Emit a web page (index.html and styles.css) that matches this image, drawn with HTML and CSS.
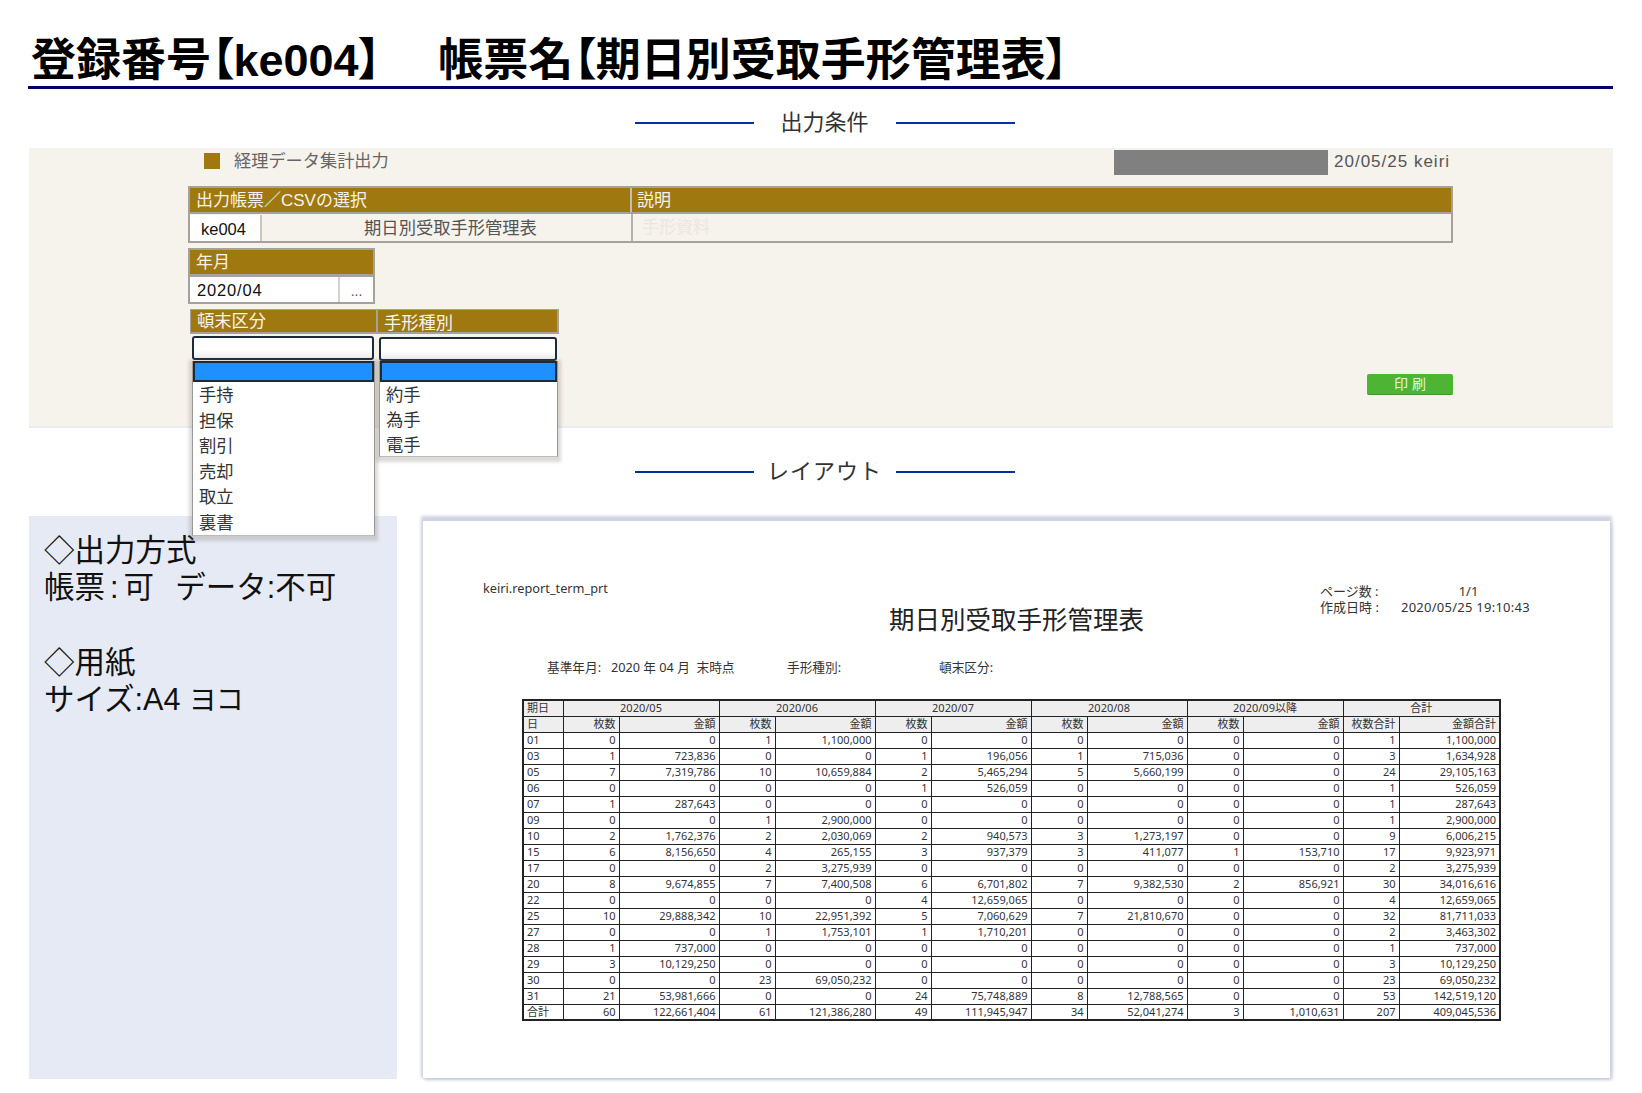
FILE: index.html
```html
<!DOCTYPE html>
<html lang="ja">
<head>
    <meta charset="UTF-8">
    <title>期日別受取手形管理表</title>
    <link rel="stylesheet" href="styles.css">
</head>
<body>
    <h1 class="page-title">登録番号【ke004】<span class="title-gap"></span>帳票名【期日別受取手形管理表】</h1>

    <div class="section-title first"><span>出力条件</span></div>

    <div class="panel">
        <div class="panel-inner">
            <div class="topbar">
                <div class="topbar-mark"></div>
                <div class="topbar-name">経理データ集計出力</div>
                <div class="topbar-mask"></div>
                <div class="topbar-date">20/05/25 keiri</div>
            </div>

            <div class="box">
                <div class="box-head">
                    <div class="head-cell head-report">出力帳票／CSVの選択</div>
                    <div class="head-cell head-desc">説明</div>
                </div>
                <div class="box-row">
                    <div class="report-code">ke004</div>
                    <div class="report-name">期日別受取手形管理表</div>
                    <div class="report-desc">手形資料</div>
                </div>
            </div>

            <div class="box box-month">
                <div class="box-head">
                    <div class="head-cell">年月</div>
                </div>
                <div class="box-row month-row">
                    <div class="month-value">2020/04</div>
                    <div class="month-button">...</div>
                </div>
            </div>

            <div class="pickers">
                <div class="picker picker-left">
                    <div class="picker-head">頓末区分</div>
                    <div class="picker-input"></div>
                    <ul class="menu">
                        <li class="menu-selected"></li>
                        <li>手持</li>
                        <li>担保</li>
                        <li>割引</li>
                        <li>売却</li>
                        <li>取立</li>
                        <li>裏書</li>
                    </ul>
                </div>
                <div class="picker picker-right">
                    <div class="picker-head">手形種別</div>
                    <div class="picker-input"></div>
                    <ul class="menu">
                        <li class="menu-selected"></li>
                        <li>約手</li>
                        <li>為手</li>
                        <li>電手</li>
                    </ul>
                </div>
            </div>

            <div class="actions">
                <button class="print-button" type="button">印 刷</button>
            </div>
        </div>
    </div>

    <div class="section-title"><span class="spaced">レイアウト</span></div>

    <div class="layout">
        <div class="notes">
            <p>◇出力方式</p>
            <p>帳票<span class="notes-colon">:</span>可&ensp;&thinsp;データ:不可</p>
            <p class="notes-blank"></p>
            <p>◇用紙</p>
            <p>サイズ:A4 <span class="notes-narrow">ヨコ</span></p>
        </div>

        <div class="sheet">
            <div class="sheet-head">
                <div class="sheet-id">keiri.report_term_prt</div>
                <div class="sheet-title">期日別受取手形管理表</div>
                <div class="sheet-meta">
                    <div class="meta-row"><span class="meta-label">ページ数 :</span><span class="meta-page">1/1</span></div>
                    <div class="meta-row"><span class="meta-label">作成日時 :</span><span class="meta-date">2020/05/25 19:10:43</span></div>
                </div>
            </div>

            <div class="sheet-filter">
                <div class="filter-base">基準年月:&nbsp;&nbsp;&nbsp;2020 年 04 月&nbsp;&nbsp;末時点</div>
                <div class="filter-kind">手形種別:</div>
                <div>頓末区分:</div>
            </div>

            <table class="report">
                <colgroup>
                    <col class="col-day">
                    <col class="col-num"><col class="col-amt">
                    <col class="col-num"><col class="col-amt">
                    <col class="col-num"><col class="col-amt">
                    <col class="col-num"><col class="col-amt">
                    <col class="col-num"><col class="col-amt">
                    <col class="col-num"><col class="col-amt">
                </colgroup>
                <thead>
                    <tr>
                        <th class="left">期日</th>
                        <th colspan="2">2020/05</th>
                        <th colspan="2">2020/06</th>
                        <th colspan="2">2020/07</th>
                        <th colspan="2">2020/08</th>
                        <th colspan="2">2020/09以降</th>
                        <th colspan="2">合計</th>
                    </tr>
                    <tr class="sub">
                        <th class="left">日</th>
                        <th>枚数</th><th>金額</th>
                        <th>枚数</th><th>金額</th>
                        <th>枚数</th><th>金額</th>
                        <th>枚数</th><th>金額</th>
                        <th>枚数</th><th>金額</th>
                        <th>枚数合計</th><th>金額合計</th>
                    </tr>
                </thead>
                <tbody>
                    <tr><td>01</td><td>0</td><td>0</td><td>1</td><td>1,100,000</td><td>0</td><td>0</td><td>0</td><td>0</td><td>0</td><td>0</td><td>1</td><td>1,100,000</td></tr>
                    <tr><td>03</td><td>1</td><td>723,836</td><td>0</td><td>0</td><td>1</td><td>196,056</td><td>1</td><td>715,036</td><td>0</td><td>0</td><td>3</td><td>1,634,928</td></tr>
                    <tr><td>05</td><td>7</td><td>7,319,786</td><td>10</td><td>10,659,884</td><td>2</td><td>5,465,294</td><td>5</td><td>5,660,199</td><td>0</td><td>0</td><td>24</td><td>29,105,163</td></tr>
                    <tr><td>06</td><td>0</td><td>0</td><td>0</td><td>0</td><td>1</td><td>526,059</td><td>0</td><td>0</td><td>0</td><td>0</td><td>1</td><td>526,059</td></tr>
                    <tr><td>07</td><td>1</td><td>287,643</td><td>0</td><td>0</td><td>0</td><td>0</td><td>0</td><td>0</td><td>0</td><td>0</td><td>1</td><td>287,643</td></tr>
                    <tr><td>09</td><td>0</td><td>0</td><td>1</td><td>2,900,000</td><td>0</td><td>0</td><td>0</td><td>0</td><td>0</td><td>0</td><td>1</td><td>2,900,000</td></tr>
                    <tr><td>10</td><td>2</td><td>1,762,376</td><td>2</td><td>2,030,069</td><td>2</td><td>940,573</td><td>3</td><td>1,273,197</td><td>0</td><td>0</td><td>9</td><td>6,006,215</td></tr>
                    <tr><td>15</td><td>6</td><td>8,156,650</td><td>4</td><td>265,155</td><td>3</td><td>937,379</td><td>3</td><td>411,077</td><td>1</td><td>153,710</td><td>17</td><td>9,923,971</td></tr>
                    <tr><td>17</td><td>0</td><td>0</td><td>2</td><td>3,275,939</td><td>0</td><td>0</td><td>0</td><td>0</td><td>0</td><td>0</td><td>2</td><td>3,275,939</td></tr>
                    <tr><td>20</td><td>8</td><td>9,674,855</td><td>7</td><td>7,400,508</td><td>6</td><td>6,701,802</td><td>7</td><td>9,382,530</td><td>2</td><td>856,921</td><td>30</td><td>34,016,616</td></tr>
                    <tr><td>22</td><td>0</td><td>0</td><td>0</td><td>0</td><td>4</td><td>12,659,065</td><td>0</td><td>0</td><td>0</td><td>0</td><td>4</td><td>12,659,065</td></tr>
                    <tr><td>25</td><td>10</td><td>29,888,342</td><td>10</td><td>22,951,392</td><td>5</td><td>7,060,629</td><td>7</td><td>21,810,670</td><td>0</td><td>0</td><td>32</td><td>81,711,033</td></tr>
                    <tr><td>27</td><td>0</td><td>0</td><td>1</td><td>1,753,101</td><td>1</td><td>1,710,201</td><td>0</td><td>0</td><td>0</td><td>0</td><td>2</td><td>3,463,302</td></tr>
                    <tr><td>28</td><td>1</td><td>737,000</td><td>0</td><td>0</td><td>0</td><td>0</td><td>0</td><td>0</td><td>0</td><td>0</td><td>1</td><td>737,000</td></tr>
                    <tr><td>29</td><td>3</td><td>10,129,250</td><td>0</td><td>0</td><td>0</td><td>0</td><td>0</td><td>0</td><td>0</td><td>0</td><td>3</td><td>10,129,250</td></tr>
                    <tr><td>30</td><td>0</td><td>0</td><td>23</td><td>69,050,232</td><td>0</td><td>0</td><td>0</td><td>0</td><td>0</td><td>0</td><td>23</td><td>69,050,232</td></tr>
                    <tr><td>31</td><td>21</td><td>53,981,666</td><td>0</td><td>0</td><td>24</td><td>75,748,889</td><td>8</td><td>12,788,565</td><td>0</td><td>0</td><td>53</td><td>142,519,120</td></tr>
                    <tr><td>合計</td><td>60</td><td>122,661,404</td><td>61</td><td>121,386,280</td><td>49</td><td>111,945,947</td><td>34</td><td>52,041,274</td><td>3</td><td>1,010,631</td><td>207</td><td>409,045,536</td></tr>
                </tbody>
            </table>
        </div>
    </div>
</body>
</html>
```

FILE: styles.css
```css
* {
    box-sizing: border-box;
}

html, body {
    margin: 0;
    padding: 0;
}

body {
    width: 1642px;
    height: 1093px;
    overflow: hidden;
    padding: 0 29px 0 28px;
    background-color: white;
    color: #111;
    font-family: "Liberation Sans", "Noto Sans CJK JP", sans-serif;
}

.page-title {
    height: 89px;
    margin: 0;
    padding: 31px 0 0 3px;
    border-bottom: 3px solid #000066;
    color: black;
    font-size: 45px;
    font-weight: bold;
    line-height: 60px;
    white-space: nowrap;
    font-feature-settings: "palt";
}

.title-gap {
    display: inline-block;
    width: 57px;
}

/* headings with a rule on both sides */
.section-title {
    display: flex;
    justify-content: center;
    align-items: center;
    gap: 29px;
    height: 88px;
    margin-left: 8px;
    font-size: 22px;
    color: #333;
}

.section-title.first {
    height: 50px;
    margin-top: 9px;
}

.section-title span {
    display: flex;
    justify-content: center;
    flex: 0 0 84px;
    min-width: 0;
    padding-bottom: 6px;
    white-space: nowrap;
}

.section-title .spaced {
    letter-spacing: 1px;
}

.section-title::before,
.section-title::after {
    content: "";
    width: 119px;
    height: 2px;
    background-color: #003399;
}

.panel {
    height: 280px;
    margin-left: 1px;
    border-bottom: 2px solid #e9ebf5;
    background-color: #f6f2ec;
}

.panel-inner {
    width: 1265px;
    margin-left: 159px;
}

.topbar {
    display: flex;
    align-items: flex-start;
    height: 38px;
}

.topbar-mark {
    width: 16px;
    height: 16px;
    margin: 5px 0 0 16px;
    background-color: #a07810;
}

.topbar-name {
    margin-left: 14px;
    color: #666;
    font-size: 17.2px;
    line-height: 26px;
}

.topbar-mask {
    width: 214px;
    height: 25px;
    margin: 2px 6px 0 auto;
    background-color: #808080;
}

.topbar-date {
    width: 119px;
    margin-top: 1px;
    color: #555;
    font-size: 17px;
    letter-spacing: 1px;
    line-height: 26px;
    white-space: nowrap;
}

.box {
    border: 2px solid #a5a29c;
}

.box-head {
    display: flex;
    height: 24px;
    background-color: #a07810;
}

.head-cell {
    padding-left: 6px;
    color: #f6f2ec;
    font-size: 17px;
    line-height: 25px;
    white-space: nowrap;
}

.head-report {
    width: 442px;
    border-right: 2px solid #c4bfae;
}

.head-desc {
    padding-left: 5px;
}

.box-row {
    display: flex;
    height: 29px;
    border-top: 2px solid #a5a29c;
}

.report-code {
    width: 72px;
    margin-top: 1px;
    border-right: 2px solid #c9c6c1;
    background-color: white;
    padding-left: 11px;
    font-size: 16.5px;
    line-height: 29px;
}

.report-name {
    width: 371px;
    padding-left: 8px;
    border-right: 2px solid #b5b2ac;
    color: #555;
    font-size: 17.3px;
    line-height: 29px;
    text-align: center;
}

.report-desc {
    padding-left: 9px;
    color: #ebe7e1;
    font-size: 17px;
    line-height: 27px;
}

.box-month {
    width: 187px;
    margin-top: 5px;
}

.month-row {
    height: 28px;
    border-top: 3px solid #a5a29c;
    background-color: white;
}

.month-value {
    width: 150px;
    padding-left: 7px;
    border-right: 2px solid #d6d3cf;
    font-size: 16.5px;
    letter-spacing: 0.85px;
    line-height: 27px;
}

.month-button {
    flex: 1;
    padding-top: 2px;
    color: #555;
    font-size: 14px;
    line-height: 25px;
    text-align: center;
}

.pickers {
    display: flex;
    margin: 5px 0 0 2px;
    height: 51px;
}

.picker {
    position: relative;
    height: 100%;
}

.picker-left {
    width: 187px;
}

.picker-right {
    width: 182px;
}

.picker-head {
    height: 25px;
    padding-left: 6px;
    border: 1px solid #a5a29c;
    border-bottom-width: 2px;
    background-color: #a07810;
    color: #f6f2ec;
    font-size: 17.3px;
    line-height: 23px;
}

.picker-right .picker-head {
    border-right-width: 2px;
    line-height: 27px;
}

.picker-input {
    height: 24px;
    margin: 2px 3px 0 2px;
    border: 2px solid #1c2b3a;
    border-radius: 3px;
    background: linear-gradient(#fff 60%, #ececec);
}

.picker-right .picker-input {
    margin: 3px 2px 0 2px;
}

.menu {
    position: absolute;
    top: 52px;
    left: 2px;
    width: 183px;
    margin: 0;
    padding: 0;
    list-style: none;
    background-color: white;
    border-right: 1px solid #999;
    border-left: 1px solid #999;
    border-bottom: 1px solid #bbb;
    box-shadow: 0 2px 3px 3px rgba(120, 110, 95, 0.25);
}

.picker-right .menu {
    left: 2px;
    width: 179px;
}

.menu li {
    height: 25.5px;
    padding-left: 6px;
    color: #333;
    font-size: 17.3px;
    line-height: 26px;
}

.picker-right .menu li {
    height: 24.8px;
}

.menu .menu-selected,
.picker-right .menu .menu-selected {
    height: 21px;
    border: 2px solid #1c2b3a;
    background-color: #1e90ff;
}

.actions {
    display: flex;
    justify-content: flex-end;
    margin-top: 14px;
}

.print-button {
    width: 86px;
    height: 21px;
    padding: 0;
    border: none;
    border-bottom: 1px solid #3d9a28;
    border-radius: 2px;
    background-color: #4eb534;
    color: #e6f5df;
    font-family: inherit;
    font-size: 14px;
    line-height: 20px;
}

.layout {
    display: flex;
    align-items: flex-start;
    gap: 26px;
    margin-left: 1px;
}

.notes {
    width: 368px;
    height: 563px;
    padding: 16px 0 0 15px;
    background-color: #e6eaf5;
    color: #111;
    font-size: 30.5px;
    line-height: 37px;
}

.notes p {
    margin: 0;
    white-space: nowrap;
}

.notes-blank {
    height: 38px;
}

.notes-colon {
    margin: 0 5px;
}

.notes-narrow {
    font-size: 28px;
    letter-spacing: -1px;
}

.sheet {
    width: 1187px;
    height: 557px;
    margin-top: 5px;
    background-color: white;
    box-shadow: 0 -3px 3px 2px #cfd3e2, 2px 2px 3px #c9cddc, -1px 1px 2px #d8dbe6;
    color: #333;
    font-family: "Noto Sans", "Noto Sans CJK JP", sans-serif;
    font-size: 13px;
}

.sheet-head {
    display: flex;
    padding: 58px 0 0 60px;
    height: 122px;
}

.sheet-id {
    width: 406px;
    font-size: 12.75px;
    line-height: 18px;
}

.sheet-title {
    width: 431px;
    padding-top: 21px;
    color: #222;
    font-family: "Noto Sans CJK JP", sans-serif;
    font-size: 25.5px;
    line-height: 36px;
    white-space: nowrap;
}

.sheet-meta {
    padding-top: 4px;
    line-height: 16px;
}

.meta-row {
    display: flex;
    white-space: nowrap;
}

.meta-label {
    width: 80px;
}

.meta-page {
    width: 137px;
    text-align: center;
}

.meta-date {
    padding-left: 1px;
    letter-spacing: 0.25px;
}

.sheet-filter {
    display: flex;
    height: 56px;
    padding: 15px 0 0 124px;
    font-size: 12.7px;
    line-height: 18px;
    white-space: nowrap;
}

.filter-base {
    width: 240px;
}

.filter-kind {
    width: 152px;
}

.report {
    width: 977px;
    margin-left: 99px;
    border-collapse: collapse;
    table-layout: fixed;
    border: 2px solid #222;
    font-size: 11px;
}

.col-day {
    width: 40px;
}

.col-num {
    width: 56px;
}

.col-amt {
    width: 100px;
}

.col-amt:last-child {
    width: 101px;
}

.report th,
.report td {
    height: 16px;
    padding: 0 3px;
    border: 1px solid #222;
    line-height: 14px;
    text-align: right;
    white-space: nowrap;
    overflow: hidden;
}

.report th {
    background-color: #eeeeee;
    font-weight: normal;
    text-align: center;
}

.report .sub th {
    text-align: right;
}

.report th.left,
.report .sub th.left,
.report td:first-child {
    text-align: left;
}
```
